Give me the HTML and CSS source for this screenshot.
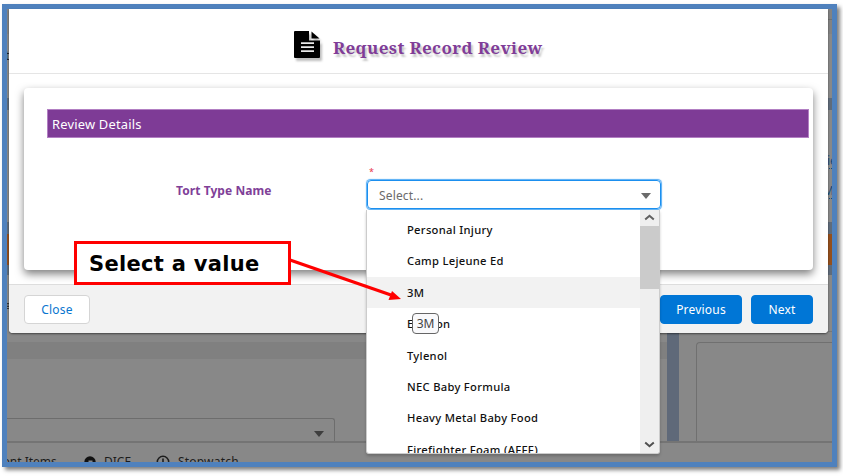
FILE: index.html
```html
<!DOCTYPE html>
<html lang="en">
<head>
<meta charset="utf-8">
<title>Request Record Review</title>
<link rel="stylesheet" href="styles.css">
</head>
<body>
<div class="frame">
  <div class="page">
    <div class="page-top"><span>t</span></div>
    <div class="band band-nav"></div>
    <div class="page-links"><div class="link">ie</div><div class="link second">M</div></div>
    <div class="band band-low"></div>
    <div class="band-orange"></div>
    <div class="band band-end"></div>
    <div class="page-panels">
      <div class="panel-left">
        <div class="grip">≡</div>
        <div class="section-strip"></div>
        <div class="page-select"><i class="caret"></i></div>
      </div>
      <div class="divider"></div>
      <div class="panel-right"><div class="outline"></div></div>
    </div>
    <div class="utility">
      <span class="recent">Recent Items</span>
      <svg class="dot" width="12" height="12" viewBox="0 0 12 12"><circle cx="6" cy="6" r="5.7" fill="#111"/><path d="M4.5 4.5h4V12h-4z" fill="#888"/></svg>
      <span class="dice">DICE</span>
      <svg class="watch" width="14" height="14" viewBox="0 0 14 14" fill="none" stroke="#1c1c1c"><circle cx="7" cy="7" r="5.7" stroke-width="1.5"/><path d="M7 3.5V8" stroke-width="1.6"/></svg>
      <span class="stop">Stopwatch</span>
    </div>
  </div>

  <div class="modal">
    <header class="modal-head">
      <svg class="doc" width="26" height="27" viewBox="0 0 26 27"><path d="M1 0h14v9.5h11V26a1 1 0 0 1-1 1H1a1 1 0 0 1-1-1V1a1 1 0 0 1 1-1z"/><path d="M17.5 .5 25.5 7.5H17.5z"/><path d="M7 12.2h13M7 16.2h13M7 20.2h13" stroke="#e8e8e8" stroke-width="1.8"/></svg>
      <h1>Request Record Review</h1>
    </header>
    <main class="modal-body">
      <section class="card">
        <h2>Review Details</h2>
        <div class="field">
          <label>Tort Type Name</label>
          <div class="control">
            <span class="required">*</span>
            <div class="select"><span>Select...</span><i class="caret"></i>
              <div class="menu">
                <ul>
                  <li>Personal Injury</li>
                  <li>Camp Lejeune Ed</li>
                  <li class="active">3M</li>
                  <li>Elmiron</li>
                  <li>Tylenol</li>
                  <li>NEC Baby Formula</li>
                  <li>Heavy Metal Baby Food</li>
                  <li>Firefighter Foam (AFFF)</li>
                </ul>
                <div class="scroll">
                  <svg width="11" height="7" viewBox="0 0 11 7"><path d="M1.2 5.6 5.5 1.8 9.8 5.6" fill="none" stroke="#606060" stroke-width="2"/></svg>
                  <div class="thumb"></div>
                  <svg class="down" width="11" height="7" viewBox="0 0 11 7"><path d="M1.2 1.4 5.5 5.2 9.8 1.4" fill="none" stroke="#505050" stroke-width="2"/></svg>
                </div>
              </div>
            </div>
          </div>
        </div>
      </section>
    </main>
    <footer class="modal-foot">
      <button class="btn">Close</button>
      <div class="actions"><button class="btn primary prev">Previous</button><button class="btn primary next">Next</button></div>
    </footer>
  </div>
</div>
<div class="tooltip">3M</div>
<svg class="arrow" width="843" height="476" viewBox="0 0 843 476"><path d="M290 260 391 295" stroke="#f00" stroke-width="3.2"/><path d="M401 299 388.5 300 392 291z" fill="#f00"/></svg>
<div class="callout">Select a value</div>
</body>
</html>
```

FILE: styles.css
```css
* { box-sizing: border-box; }
body { margin: 0; width: 843px; height: 476px; overflow: hidden; background: #fff; font-family: "Noto Sans", sans-serif; font-size: 12px; padding: 4px 0 0 2px; }
.frame { position: relative; width: 835px; height: 463px; border: 5px solid #4f81bd; box-shadow: 3px 3px 4px rgba(0,0,0,.5); background: #888; }

/* dimmed page behind the dialog */
.page { position: absolute; inset: 0; display: flex; flex-direction: column; overflow: hidden; color: #1c1c1c; }
.page-top { height: 89px; flex: none; padding-top: 38px; line-height: 17px; background: linear-gradient(#707070, #707070) 100% 10px / 10px 1px no-repeat, linear-gradient(#828282 25px, #888 25px); }
.page-top span { margin-left: -2px; }
.band { background: #5f6b7a; flex: none; }
.band-nav { height: 12px; }
.page-links { height: 112px; flex: none; padding: 42px 0 0 820px; color: #174a78; }
.link { height: 17px; line-height: 17px; border-bottom: 1px dotted #174a78; }
.second { margin: 13px 0 0 -4px; }
.band-low { height: 12px; }
.band-orange { height: 31px; flex: none; background: #944f1c; }
.band-end { height: 10px; }
.page-panels { height: 167px; flex: none; display: flex; }
.panel-left { width: 660px; padding-top: 23px; }
.grip { height: 44px; margin-left: -4px; line-height: 16px; }
.section-strip { height: 17px; background: #808080; }
.page-select { width: 328px; height: 24px; margin-top: 59px; border: 1px solid #6d6d6d; border-left: 0; border-radius: 0 3px 0 0; border-bottom: 0; display: flex; justify-content: flex-end; padding: 12px 10px 0 0; }
.page-select .caret { border-top-color: #3e3e3e; }
.divider { width: 12px; background: #5f6979; }
.panel-right { flex: 1; padding: 67px 0 0 17px; background: linear-gradient(#777, #777) 0 56px / 100% 1px no-repeat; }
.outline { height: 100px; border: solid #707070; border-width: 1px 0 0 1px; border-radius: 4px 0 0 0; }
.utility { position: relative; flex: none; height: 40px; border-top: 2px solid #747474; background: #888; display: flex; padding-top: 11px; line-height: 16px; margin-top: -1px; }
.recent { margin-left: -24px; width: 74px; white-space: nowrap; letter-spacing: 0; }
.dot { margin: 2px 0 0 27px; }
.dice { margin-left: 8px; width: 28px; font-size: 12px; }
.watch { margin: 1px 0 0 24px; }
.stop { margin-left: 8px; letter-spacing: .2px; }

.caret { display: block; width: 0; height: 0; border: 5px solid transparent; border-top: 6px solid #6b6b6b; border-bottom: 0; }
.select .caret { margin-top: 2px; }

/* dialog */
.modal { position: relative; width: 819px; height: 324px; margin-left: 2px; background: #fff; border-radius: 0 0 4px 4px; box-shadow: 0 1px 2px rgba(0,0,0,.5); display: flex; flex-direction: column; }
.modal-head { height: 65px; flex: none; border-bottom: 1px solid #e5e5e5; display: flex; padding: 22px 0 0 285px; }
.doc { margin-right: 13px; filter: drop-shadow(2px 3px 1px rgba(0,0,0,.25)); overflow: visible; flex: none; }
h1 { margin: 5px 0 0; font: bold 17px/24px "Noto Serif", "DejaVu Serif Condensed", "DejaVu Serif", serif; font-stretch: condensed; letter-spacing: .39px; color: #803d98; text-shadow: 2px 3px 2px rgba(0,0,0,.22); white-space: nowrap; }
.modal-body { height: 210px; flex: none; padding: 14px 15px; position: relative; z-index: 1; }
.card { height: 182px; border-radius: 4px; background: #fff; box-shadow: 0 4px 9px rgba(0,0,0,.5); padding: 21px 4px 0 23px; }
h2 { margin: 0; height: 29px; font-size: 12.9px; line-height: 29px; font-weight: 400; letter-spacing: .2px; padding-left: 4px; color: #fff; background: #7e3b96; border: 1px solid #b27fc3; }
.field { display: flex; }
label { width: 320px; padding: 44px 0 0 129px; font-size: 12px; line-height: 18px; font-weight: 700; color: #804098; white-space: nowrap; letter-spacing: .07px; }
.control { width: 294px; flex: none; padding-top: 27px; }
.required { display: block; height: 15px; line-height: 13px; padding-left: 2px; font-size: 9px; color: #e8344c; }
.select { position: relative; height: 29px; border: 1px solid #1b8fef; box-shadow: 0 0 1px 0.5px #55adf5; border-radius: 4px; display: flex; justify-content: space-between; align-items: center; padding: 1px 9px 0 11px; color: #6b6b6b; letter-spacing: .15px; }
.menu { position: absolute; top: 29px; left: -2px; width: 294px; height: 244px; display: flex; background: #fff; border: solid #ccc; border-width: 0 1px 1px; border-radius: 0 0 3px 3px; overflow: hidden; box-shadow: 0 2px 3px rgba(0,0,0,.2); }
.menu ul { margin: 0; padding: 4px 0 0; list-style: none; flex: 1; }
.menu li { height: 31.4px; line-height: 31.4px; padding-left: 40px; font-size: 11.2px; letter-spacing: .3px; color: #101010; white-space: nowrap; font-weight: 500; }
.menu .active { background: #f2f2f2; }
.scroll { width: 19px; background: #efefef; display: flex; flex-direction: column; align-items: center; padding-top: 4px; flex: none; }
.thumb { width: 100%; height: 63px; background: #cbcbcb; margin-top: 5px; }
.down { margin-top: auto; margin-bottom: 5px; }
.modal-foot { height: 49px; background: #f2f2f2; border-top: 1px solid #ddd; border-radius: 0 0 4px 4px; display: flex; justify-content: space-between; padding: 10px 15px 0; }
.actions { display: flex; gap: 9px; }
.btn { height: 29px; width: 66px; padding: 0 0 1px; border: 1px solid #d5d5d5; border-radius: 4px; font: 12px "Noto Sans", sans-serif; letter-spacing: .2px; background: #fff; color: #0876cf; }
.primary { background: #0076d6; border-color: #0076d6; color: #fff; }
.prev { width: 82px; }
.next { width: 62px; }

/* annotations */
.tooltip { position: absolute; z-index: 2; left: 412px; top: 313px; width: 27px; height: 21px; border: 1px solid #666; border-radius: 4px; background: #f9f9fb; color: #444; text-align: center; line-height: 20px; font-size: 12px; }
.arrow { position: absolute; z-index: 2; left: 0; top: 0; }
.callout { position: absolute; z-index: 2; left: 74px; top: 241px; width: 217px; height: 44px; border: 3px solid #f00; background: #fff; padding-left: 12px; font: bold 21px/41px "DejaVu Sans", sans-serif; letter-spacing: .3px; color: #000; white-space: nowrap; }
```
